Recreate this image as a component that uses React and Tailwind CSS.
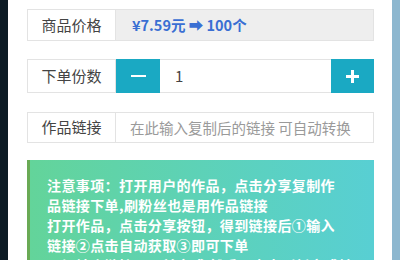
export default function App() {
  const font = { fontFamily: '"Noto Sans CJK SC", "Noto Sans", sans-serif' };
  return (
    <div className="w-[400px] h-[260px] overflow-hidden flex bg-white" style={font}>
      <div className="w-[8px] h-full bg-[#0d1b25]" />
      <div className="flex-1 h-full bg-white pl-[19px] pr-[18px] pt-[9px] flex flex-col overflow-hidden">
        {/* Row 1 */}
        <div className="flex h-[32px] shrink-0">
          <div className="w-[89px] flex items-center justify-center border border-[#e3e3e3] bg-white text-[15px] text-[#444]">
            商品价格
          </div>
          <div className="flex-1 flex items-center pl-[16px] bg-[#eeeeee] border border-l-0 border-[#e3e3e3] text-[14.5px] font-bold text-[#3a6fd3]">
            ¥7.59元 ➡ 100个
          </div>
        </div>
        {/* Row 2 */}
        <div className="flex h-[34px] mt-[18px] shrink-0">
          <div className="w-[89px] flex items-center justify-center border border-[#e3e3e3] bg-white text-[15px] text-[#444]">
            下单份数
          </div>
          <div className="w-[44px] bg-[#1aa9c3] flex items-center justify-center">
            <div className="w-[15px] h-[2px] bg-white" />
          </div>
          <div className="flex-1 flex items-center pl-[15px] border-y border-[#e3e3e3] text-[15px] text-[#444]">
            1
          </div>
          <div className="w-[43px] bg-[#1aa9c3] flex items-center justify-center">
            <svg width="13" height="13" viewBox="0 0 13 13">
              <rect x="5" y="0" width="3" height="13" fill="white" />
              <rect x="0" y="5" width="13" height="3" fill="white" />
            </svg>
          </div>
        </div>
        {/* Row 3 */}
        <div className="flex h-[31px] mt-[19px] shrink-0">
          <div className="w-[89px] flex items-center justify-center border border-[#e3e3e3] bg-white text-[15px] text-[#444]">
            作品链接
          </div>
          <div className="flex-1 flex items-center pl-[14px] border border-l-0 border-[#e3e3e3] text-[14.5px] text-[#9a9a9a] whitespace-nowrap overflow-hidden">
            在此输入复制后的链接 可自动转换
          </div>
        </div>
        {/* Notice */}
        <div className="mt-[17px] shrink-0 h-[140px] border-l-[3px] border-[#6aaa55] bg-gradient-to-r from-[#63d49a] to-[#58cfd3] pl-[17px] pt-[15px] text-white font-bold text-[14px] tracking-[0.4px] leading-[20px]">
          <div className="whitespace-nowrap">注意事项：打开用户的作品，点击分享复制作</div>
          <div className="whitespace-nowrap">品链接下单,刷粉丝也是用作品链接</div>
          <div className="whitespace-nowrap">打开作品，点击分享按钮，得到链接后①输入</div>
          <div className="whitespace-nowrap">链接②点击自动获取③即可下单</div>
          <div className="whitespace-nowrap">一切社会链接已目前完成 然后，点击刷新完成转</div>
        </div>
      </div>
      <div className="w-[8px] h-full bg-[#8db7cf]" />
    </div>
  );
}
